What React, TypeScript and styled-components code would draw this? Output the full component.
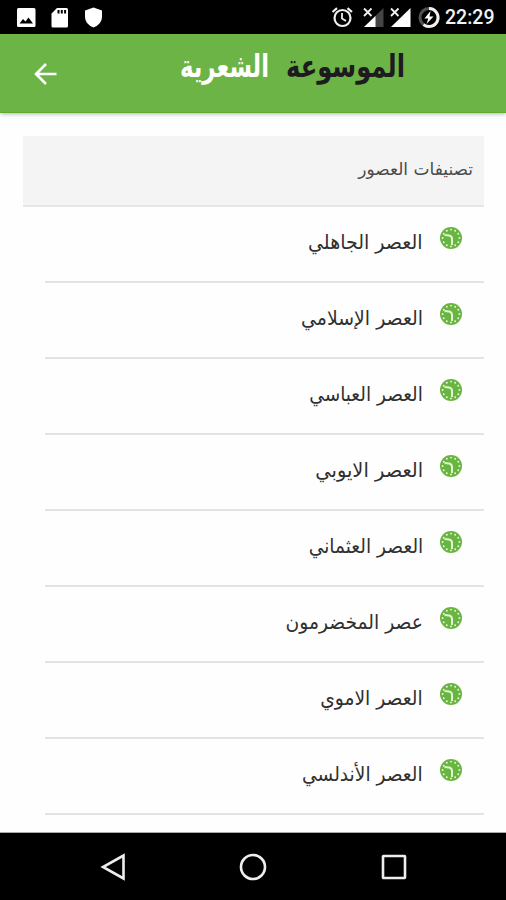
import React from 'react';
import styled, { createGlobalStyle } from 'styled-components';

const GlobalStyle = createGlobalStyle`
  * { box-sizing: border-box; }
  body { margin: 0; background: #fff; }
`;

const Screen = styled.div`
  width: 506px;
  height: 900px;
  display: flex;
  flex-direction: column;
  background: #fefefe;
  overflow: hidden;
  font-family: 'DejaVu Sans', sans-serif;
`;

const StatusBar = styled.div`
  height: 34px;
  flex: none;
  background: #000;
  display: flex;
  justify-content: space-between;
  padding: 0 11px 0 0;
`;

const StatusGroup = styled.div`
  display: flex;
  svg { display: block; }
`;

const Time = styled.span`
  width: 50px;
  font: 500 19.5px/36px Roboto, sans-serif;
  color: #f2f2f2;
  white-space: nowrap;
`;

const AppBar = styled.header`
  height: 79px;
  flex: none;
  display: flex;
  background: #6bb445;
  border-bottom: 1px solid #5faa32;
  box-shadow: 0 1px 4px rgba(0, 0, 0, 0.3);
`;

const BackButton = styled.button`
  width: 90px;
  height: 79px;
  padding: 0;
  border: 0;
  background: none;
  display: flex;
  align-items: center;
  justify-content: center;
`;

const Brand = styled.h1`
  margin: 0 0 0 90px;
  width: 225px;
  height: 66px;
  display: flex;
  justify-content: space-between;
  align-items: center;
`;

const BrandWord = styled.span<{ $tone: string; $width: number; $scale: number }>`
  display: block;
  width: ${p => p.$width}px;
  font: 700 28px/40px 'DejaVu Sans', sans-serif;
  color: ${p => p.$tone};
  white-space: nowrap;
  transform: scale(${p => p.$scale}, 1.12);
  transform-origin: right 22px;
`;

const Content = styled.main`
  flex: 1;
  min-height: 0;
  padding: 23px 22px 0 23px;
`;

const SectionTitle = styled.h2`
  margin: 0;
  height: 71px;
  padding: 0 11px;
  background: #f4f4f4;
  border-bottom: 2px solid #e6e6e6;
  font-size: 17px;
  font-weight: 400;
  line-height: 66px;
  color: #4a4a4a;
`;

const Eras = styled.ul`
  margin: 0 0 0 22px;
  padding: 0;
  list-style: none;
`;

const Era = styled.li`
  height: 76px;
  padding: 0 22px 0 0;
  border-bottom: 2px solid #e3e3e3;
  display: flex;
  gap: 17px;
`;

const EraIcon = styled.span`
  width: 22px;
  height: 22px;
  margin-top: 20px;
  svg { display: block; }
`;

const EraName = styled.span<{ $scale: number }>`
  display: block;
  white-space: nowrap;
  font-size: 20px;
  line-height: 70px;
  height: 70px;
  color: #303030;
  transform: scaleX(${p => p.$scale});
  transform-origin: right center;
`;

const NavBar = styled.nav`
  height: 68px;
  flex: none;
  border-top: 1px solid #aaa;
  background: #000;
  display: flex;
  justify-content: space-between;
  align-items: center;
  padding: 0 98px;
  svg { display: block; }
`;

const eras = [
  { name: 'العصر الجاهلي', scale: 0.95 },
  { name: 'العصر الإسلامي', scale: 0.945 },
  { name: 'العصر العباسي', scale: 0.925 },
  { name: 'العصر الايوبي', scale: 0.97 },
  { name: 'العصر العثماني', scale: 0.93 },
  { name: 'عصر المخضرمون', scale: 0.935 },
  { name: 'العصر الاموي', scale: 0.935 },
  { name: 'العصر الأندلسي', scale: 0.93 },
];

const ticks = Array.from({ length: 12 }, (_, i) => {
  const a = (i * Math.PI) / 6;
  return { x: 11 + 8.4 * Math.sin(a), y: 11 - 8.4 * Math.cos(a) };
});

function ClockIcon() {
  return (
    <svg width="22" height="22" viewBox="0 0 22 22">
      <circle cx="11" cy="11" r="11" fill="#68b53f" />
      {ticks.map((t, i) => (
        <circle key={i} cx={t.x} cy={t.y} r="0.95" fill="#e8f8dc" />
      ))}
      <path d="M4.500 8 9 8.500Q12 9 12 12V18" fill="none" stroke="#e4f5d8" strokeWidth="2" />
    </svg>
  );
}

function NoticeIcons() {
  return (
    <svg width="110" height="34" viewBox="0 0 110 34" fill="#fff">
      <path fillRule="evenodd" d="M18.5 8H34q1.500 0 1.500 1.500V25.500q0 1.500-1.500 1.500H18.500q-1.500 0-1.500-1.500V9.500q0-1.500 1.500-1.500ZM19.500 23.500H33L28.500 17.500 25.500 21.500 23 19Z" />
      <path fillRule="evenodd" d="M57 8h9.500q1.500 0 1.500 1.500V26q0 1.500-1.500 1.500H53q-1.500 0-1.500-1.500V13.500ZM57.500 10v3.500h2V10Zm3.300 0v3.500h2V10Zm3.300 0v3.500h2V10Z" />
      <path d="M93.500 7.500 102 10.500V17q0 7-8.500 10.500Q85 24 85 17V10.500Z" />
    </svg>
  );
}

function SystemIcons() {
  return (
    <svg width="124" height="34" viewBox="321 0 124 34" fill="none" stroke="#f0f0f0">
      <circle cx="342.500" cy="18" r="8" strokeWidth="2.200" />
      <path d="M342 13v5.500l4 2.500" strokeWidth="1.800" />
      <path d="m332.500 12 4.500-3.800m10.500 0 4.500 3.800" strokeWidth="2.200" />
      <path d="M383.500 8v19H364Z" fill="#444" stroke="none" />
      <path d="M375.500 16v11H364Z" fill="#fff" stroke="none" />
      <path d="M410.500 8v19H391Z" fill="#fff" stroke="none" />
      <path d="m363.500 7.500 8.500 9m0-9-8.500 9m27-9 8.500 9m0-9-8.500 9" stroke="#000" strokeWidth="4" />
      <path d="m364 8.500 7.500 7.500m0-7.500-7.500 7.500m27-7.500 7.500 7.500m0-7.500-7.500 7.500" strokeWidth="1.800" />
      <circle cx="429" cy="17.500" r="9" stroke="#505050" strokeWidth="3" />
      <path d="M429 8.500a9 9 0 1 1-5.500 16.100" strokeWidth="3" />
      <path d="m430.500 11-6 7.500h3.800L426.500 24l7-7.500h-4Z" fill="#fff" stroke="none" />
    </svg>
  );
}

export default function App() {
  return (
    <Screen>
      <GlobalStyle />
      <StatusBar>
        <NoticeIcons />
        <StatusGroup>
          <SystemIcons />
          <Time>22:29</Time>
        </StatusGroup>
      </StatusBar>
      <AppBar>
        <BackButton aria-label="رجوع">
          <svg width="26" height="26" viewBox="0 0 26 26" fill="none" stroke="#fff" strokeWidth="2.600">
            <path d="M24.500 13H4M14 3 4 13 14 23" />
          </svg>
        </BackButton>
        <Brand dir="rtl">
          <BrandWord $tone="#1e1a20" $width={120} $scale={0.865}>الموسوعة</BrandWord>
          <BrandWord $tone="#fff" $width={89} $scale={0.815}>الشعرية</BrandWord>
        </Brand>
      </AppBar>
      <Content dir="rtl">
        <SectionTitle>تصنيفات العصور</SectionTitle>
        <Eras>
          {eras.map(era => (
            <Era key={era.name}>
              <EraIcon><ClockIcon /></EraIcon>
              <EraName $scale={era.scale}>{era.name}</EraName>
            </Era>
          ))}
        </Eras>
      </Content>
      <NavBar>
        <svg width="28" height="30" viewBox="0 0 28 30" fill="none" stroke="#eee" strokeWidth="2.600">
          <path d="M25.500 3.500v23L5 15Z" />
        </svg>
        <svg width="30" height="30" viewBox="0 0 30 30" fill="none" stroke="#eee" strokeWidth="2.600">
          <circle cx="15" cy="15" r="12" />
        </svg>
        <svg width="28" height="30" viewBox="0 0 28 30" fill="none" stroke="#eee" strokeWidth="2.600">
          <rect x="3" y="4" width="22" height="22" rx="0.500" />
        </svg>
      </NavBar>
    </Screen>
  );
}
